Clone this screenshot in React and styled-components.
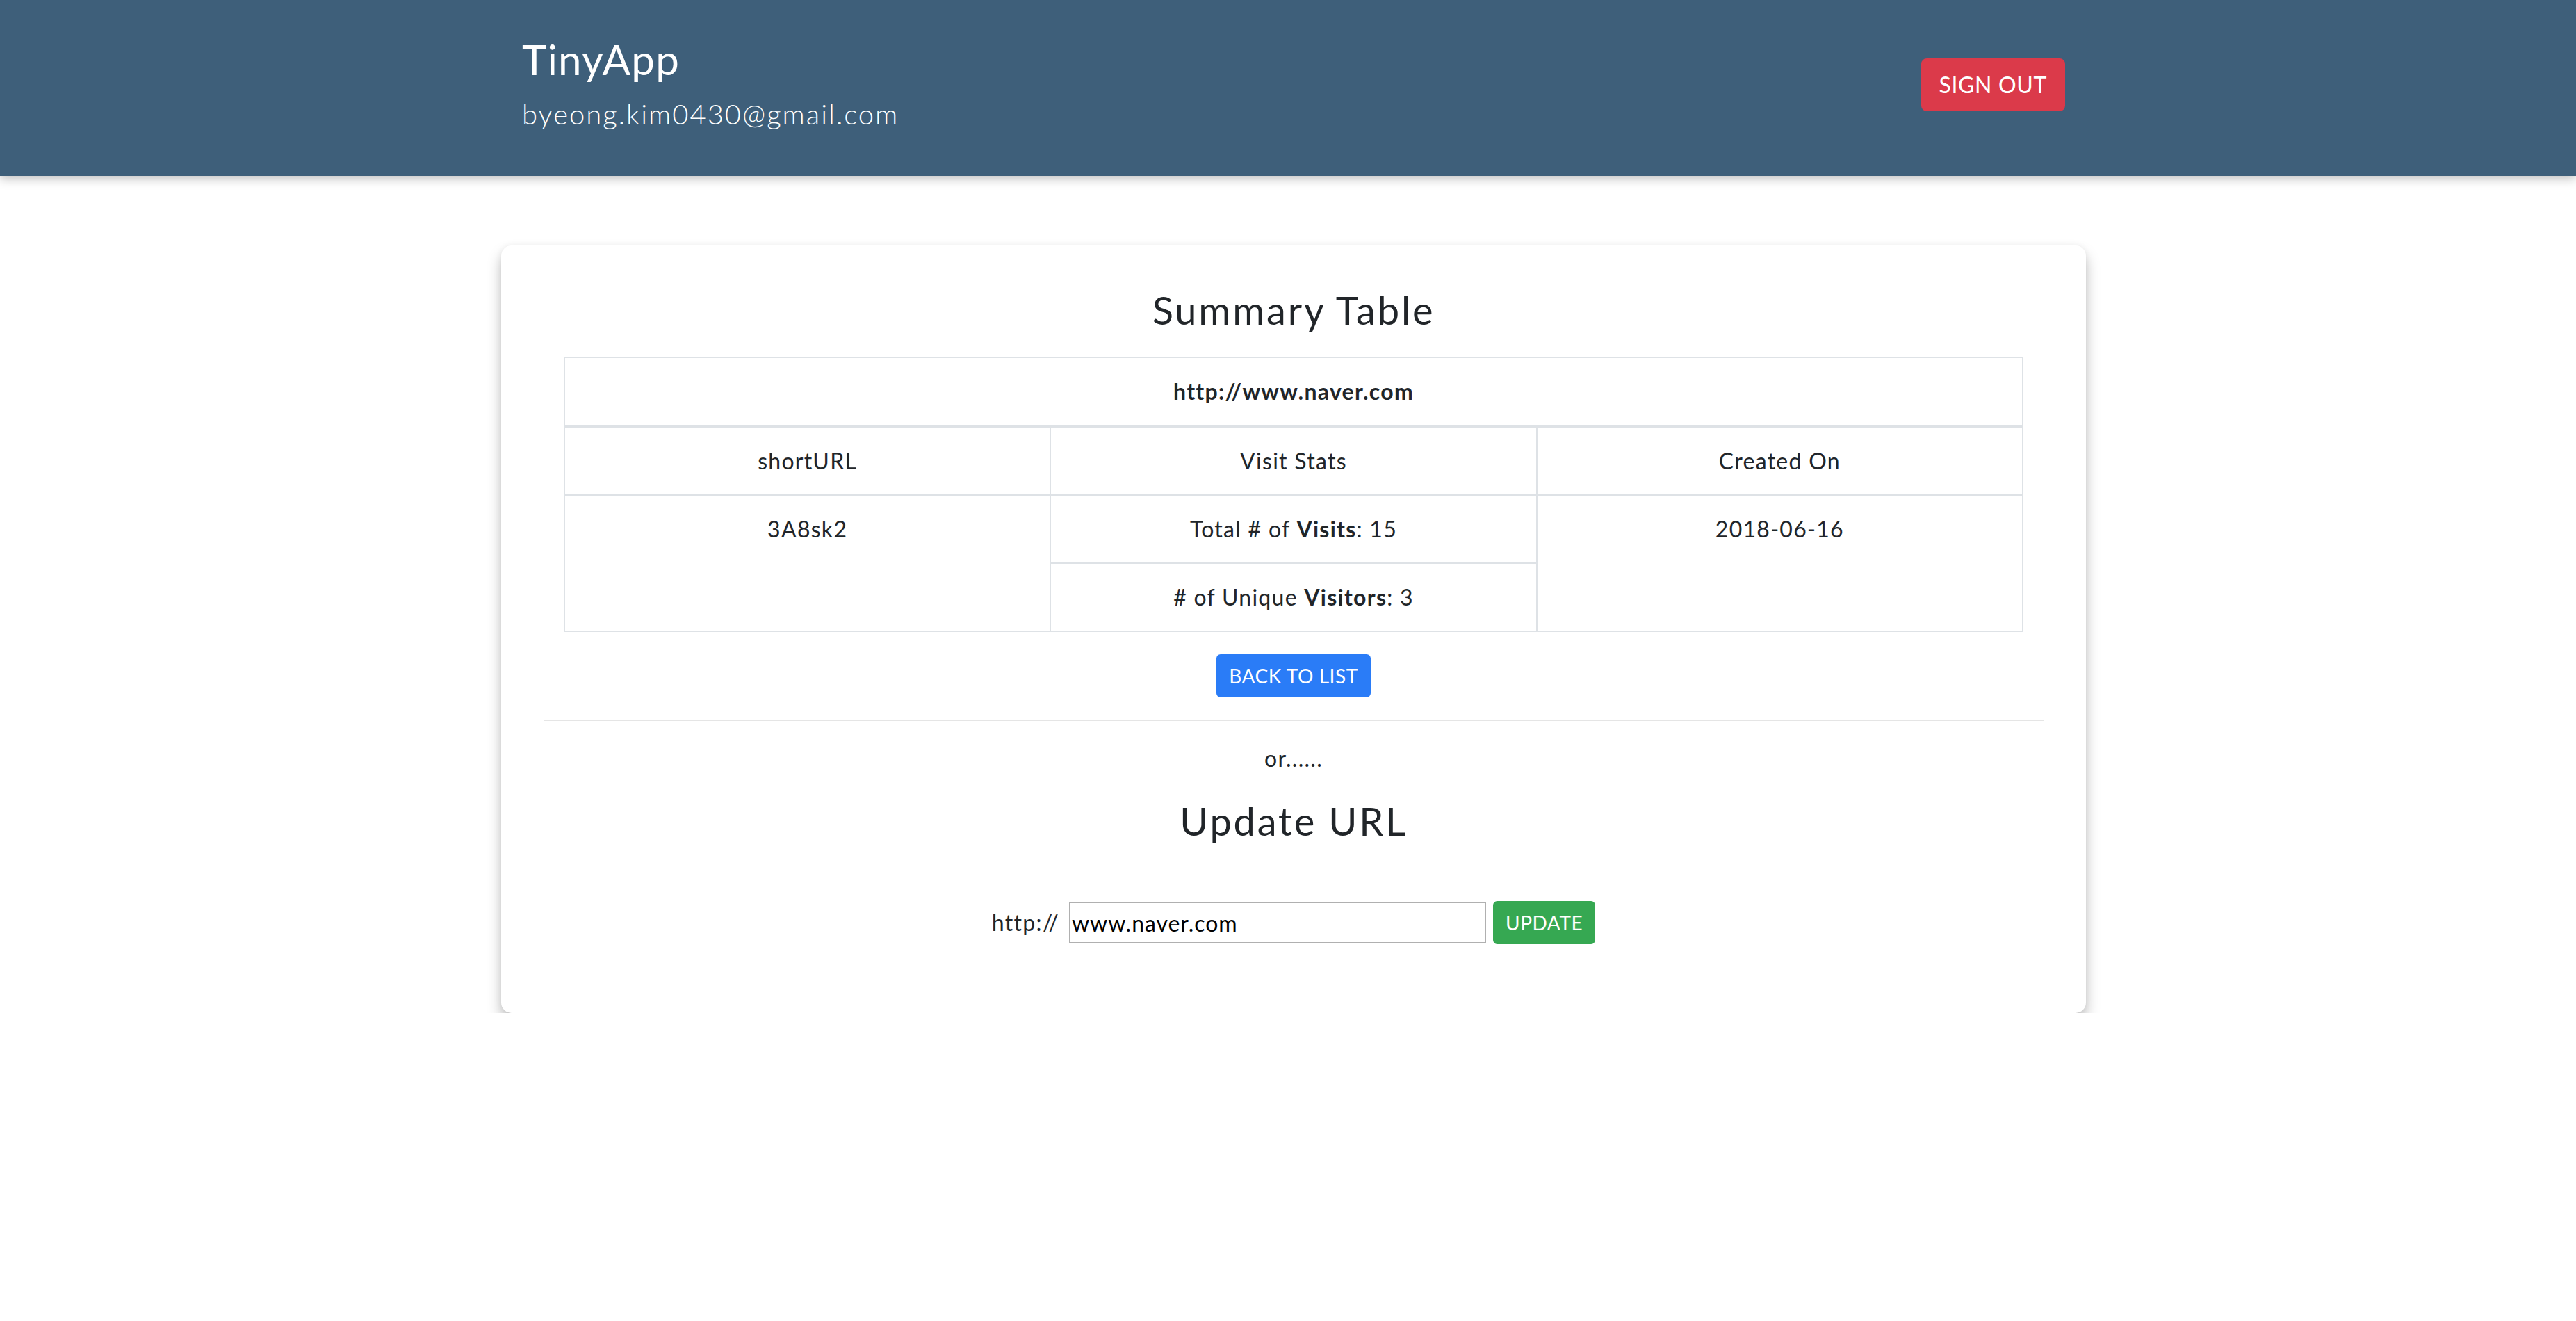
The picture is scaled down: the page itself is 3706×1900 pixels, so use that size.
import React, { useState } from "react";
import styled, { createGlobalStyle } from "styled-components";

const GlobalStyle = createGlobalStyle`
  body {
    margin: 0;
    font-family: Lato, "Open Sans", sans-serif;
    font-size: 32px;
    line-height: 1.5;
    letter-spacing: 0.04em;
    color: #212529;
    background: #fff;
  }
`;

function App() {
  const [longURL, setLongURL] = useState("www.naver.com");

  const updateURL = (e) => {
    e.preventDefault();
  };

  return (
    <>
      <GlobalStyle />
      <Header>
        <Container>
          <Brand>
            <Title>TinyApp</Title>
            <Email>byeong.kim0430@gmail.com</Email>
          </Brand>
          <Button variant="danger">SIGN OUT</Button>
        </Container>
      </Header>

      <Page>
        <Card>
          <Heading>Summary Table</Heading>
          <Table>
            <thead>
              <tr>
                <UrlCell colSpan={3}>http://www.naver.com</UrlCell>
              </tr>
              <tr>
                <Cell>shortURL</Cell>
                <Cell>Visit Stats</Cell>
                <Cell>Created On</Cell>
              </tr>
            </thead>
            <tbody>
              <tr>
                <Cell rowSpan={2}>3A8sk2</Cell>
                <Cell>
                  Total # of <b>Visits</b>: 15
                </Cell>
                <Cell rowSpan={2}>2018-06-16</Cell>
              </tr>
              <tr>
                <Cell>
                  # of Unique <b>Visitors</b>: 3
                </Cell>
              </tr>
            </tbody>
          </Table>
          <Center>
            <Button variant="primary" small>
              BACK TO LIST
            </Button>
          </Center>
          <Divider />
          <Or>or......</Or>
          <Heading second>Update URL</Heading>
          <UpdateForm onSubmit={updateURL}>
            <Prefix>http://</Prefix>
            <UrlInput
              type="text"
              name="longURL"
              value={longURL}
              onChange={(e) => setLongURL(e.target.value)}
            />
            <Button variant="success" small type="submit">
              UPDATE
            </Button>
          </UpdateForm>
        </Card>
      </Page>
    </>
  );
}

export default App;

const colors = {
  danger: "#db3a4a",
  primary: "#2a7cf7",
  success: "#36a852",
};

const Header = styled.header`
  background: #3e5f7a;
  height: 253px;
  box-sizing: border-box;
  padding: 49px 0 0 16px;
  box-shadow: 0 4px 14px rgba(0, 0, 0, 0.25);
  position: relative;
`;

const Container = styled.div`
  width: 2280px;
  box-sizing: border-box;
  padding: 0 30px;
  margin: 0 auto;
  display: flex;
  align-items: center;
  justify-content: space-between;
`;

const Brand = styled.div`
  display: flex;
  flex-direction: column;
  color: #fff;
`;

const Title = styled.h1`
  margin: 0 0 13px;
  font-size: 60px;
  font-weight: 400;
  line-height: 1.2;
  letter-spacing: 0.02em;
`;

const Email = styled.p`
  margin: 0;
  font-size: 40px;
  font-weight: 300;
  line-height: 1.5;
  letter-spacing: 0.05em;
`;

const Button = styled.button`
  font-family: inherit;
  letter-spacing: 0.02em;
  color: #fff;
  background: ${(p) => colors[p.variant]};
  border: 2px solid ${(p) => colors[p.variant]};
  border-radius: ${(p) => (p.small ? "6px" : "8px")};
  font-size: ${(p) => (p.small ? "28px" : "32px")};
  line-height: 1.5;
  padding: ${(p) => (p.small ? "8px 16px" : "12px 24px")};
  font-weight: 400;
  cursor: pointer;
`;

const Page = styled.main`
  padding: 100px 0 0 16px;
`;

const Card = styled.section`
  width: 2280px;
  box-sizing: border-box;
  margin: 0 auto;
  padding: 59px 61px 99px;
  background: #fff;
  border-radius: 15px;
  box-shadow: 0 12px 20px rgba(0, 0, 0, 0.26), 0 0 10px rgba(0, 0, 0, 0.05);
  text-align: center;
`;

const Heading = styled.h3`
  margin: ${(p) => (p.second ? "32px 0 82px" : "0 0 34px")};
  font-size: 56px;
  font-weight: 400;
  line-height: 1.2;
  letter-spacing: 0.05em;
`;

const Table = styled.table`
  width: calc(100% - 58px);
  margin: 0 29px 32px;
  border-collapse: collapse;
  table-layout: fixed;
`;

const Cell = styled.td`
  border: 2px solid #dee2e6;
  padding: 24px;
  vertical-align: top;
  font-weight: 400;
  b {
    font-weight: 700;
  }
`;

const UrlCell = styled(Cell).attrs({ as: "th" })`
  font-weight: 700;
  border-bottom-width: 4px;
`;

const Center = styled.div`
  display: flex;
  justify-content: center;
`;

const Divider = styled.hr`
  margin: 32px 0 30px;
  border: 0;
  border-top: 2px solid rgba(0, 0, 0, 0.1);
`;

const Or = styled.p`
  margin: 0;
`;

const UpdateForm = styled.form`
  display: flex;
  justify-content: center;
  align-items: center;
  gap: 12px;
`;

const Prefix = styled.span`
  margin-right: 2px;
`;

const UrlInput = styled.input`
  width: 600px;
  height: 60px;
  box-sizing: border-box;
  font-family: inherit;
  font-size: 32px;
  letter-spacing: 0.03em;
  color: #000;
  padding: 0 2px;
  border: 2px solid #b0b0b0;
  margin-right: -2px;
`;
